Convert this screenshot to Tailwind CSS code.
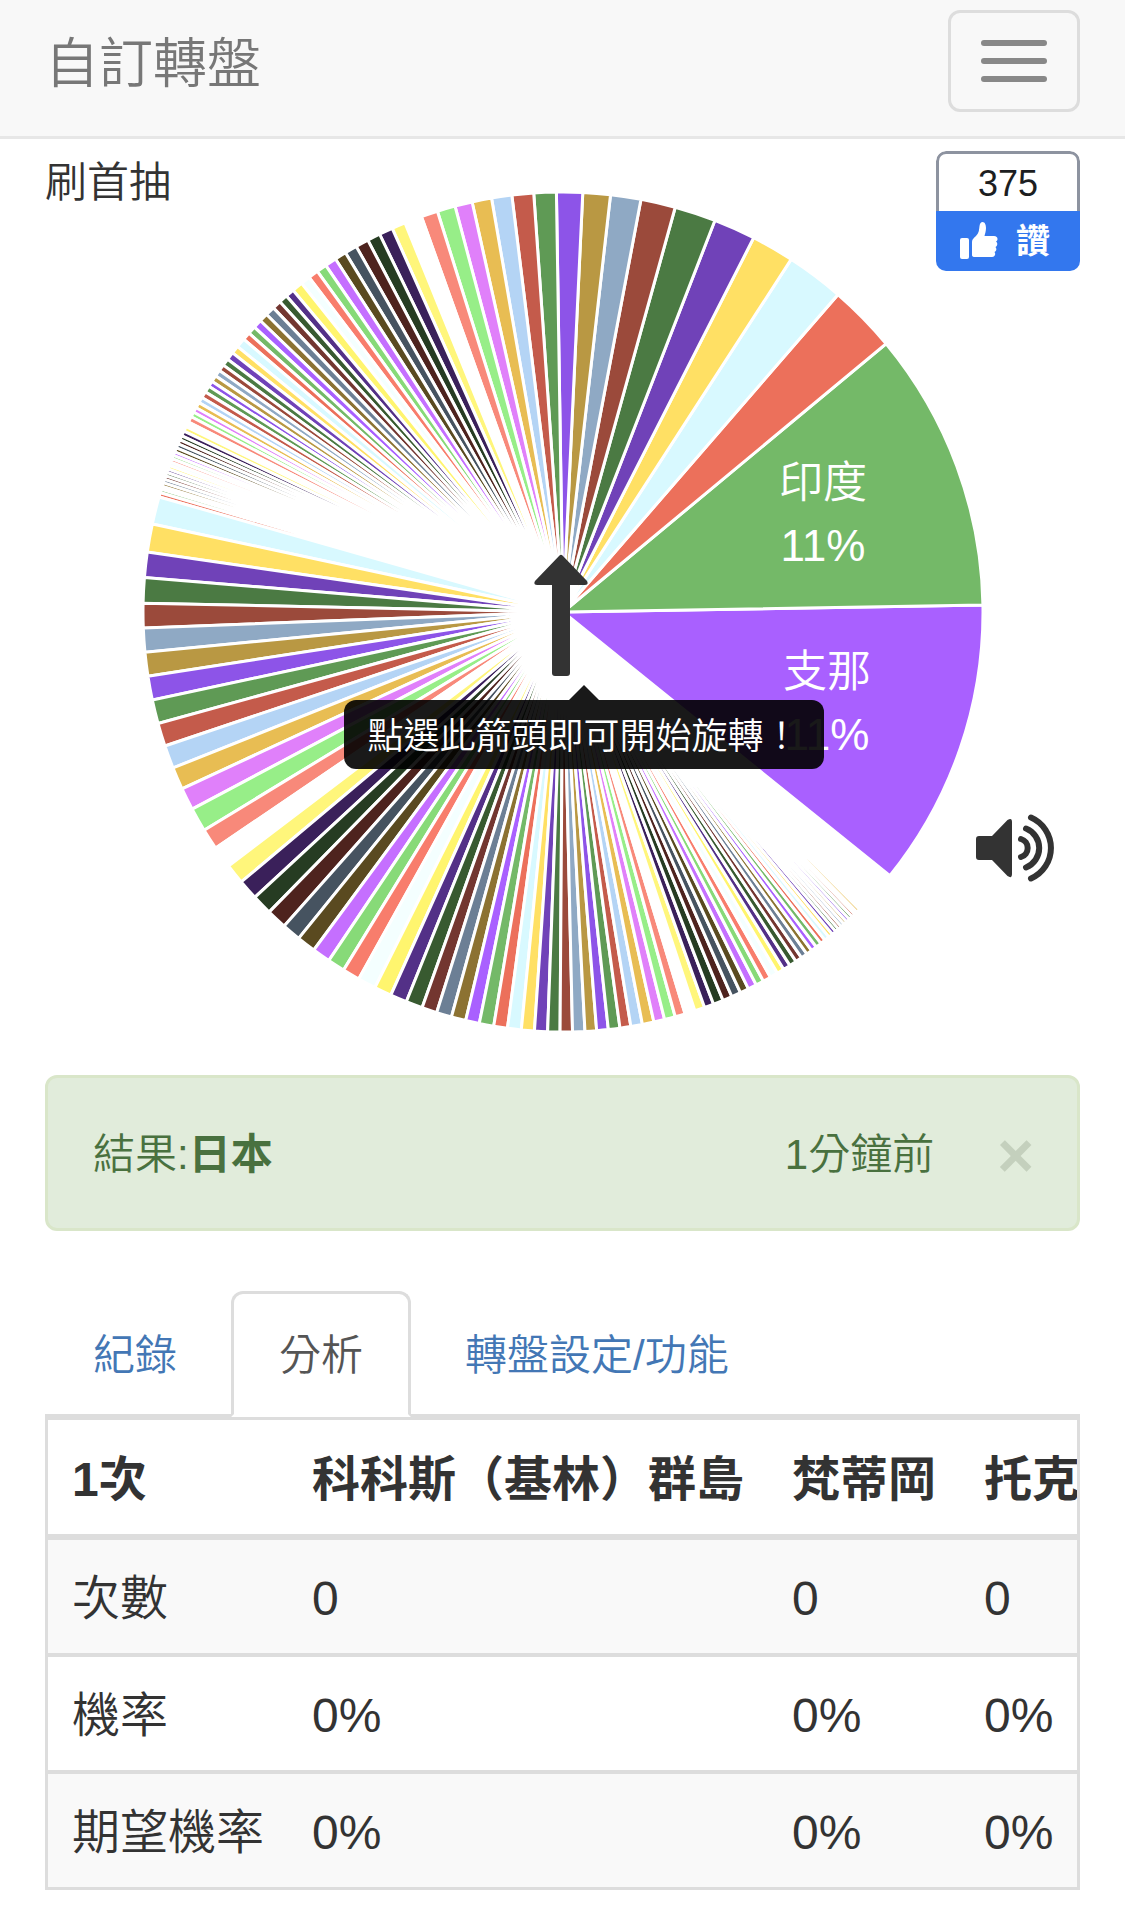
<!DOCTYPE html>
<html lang="zh-Hant">
  <head>
    <meta charset="UTF-8" />
    <meta name="viewport" content="width=device-width, initial-scale=1.0" />
    <title>自訂轉盤</title>
    <script src="https://cdn.jsdelivr.net/npm/@tailwindcss/browser@4"></script>
  </head>
  <body
    class="bg-white text-[#333] font-[350] font-['Liberation_Sans','Noto_Sans_CJK_TC',sans-serif]"
  >
    <nav
      class="bg-[#f8f8f8] border-b-3 border-[#e7e7e7] px-[45px] pt-[10px] pb-[18px] flex justify-between items-start"
    >
      <a href="#" class="text-[54px] leading-[108px] text-[#777]">自訂轉盤</a>
      <button
        type="button"
        aria-label="選單"
        class="w-[132px] h-[102px] border-3 border-[#ddd] rounded-xl flex flex-col items-center justify-center gap-3"
      >
        <span class="block w-[66px] h-[6px] rounded-[3px] bg-[#888]"></span>
        <span class="block w-[66px] h-[6px] rounded-[3px] bg-[#888]"></span>
        <span class="block w-[66px] h-[6px] rounded-[3px] bg-[#888]"></span>
      </button>
    </nav>

    <main class="px-[45px] pb-[18px]">
      <section class="relative pt-[51px] pb-[41px]">
        <h1 class="absolute left-0 top-[14px] text-[42px] leading-[60px]">刷首抽</h1>

        <!-- like counter -->
        <button
          type="button"
          class="absolute right-0 top-3 w-[144px] h-[120px] rounded-[10px] overflow-hidden flex flex-col"
        >
          <span
            class="w-full h-[60px] border-3 border-b-0 border-[#8d93a0] rounded-t-[10px] text-[36px] leading-[60px] text-[#1c1e21]"
            >375</span
          >
          <span
            class="w-full h-[60px] pr-[6px] bg-[#3377ee] text-white text-[34px] leading-[60px] font-bold flex items-center justify-center gap-[18px]"
          >
            <svg class="w-[38px] h-[38px]" viewBox="0 0 38 38" fill="currentColor">
              <rect x="0" y="16" width="9" height="21" rx="2" />
              <path
                d="M12 20 C12 17 14 16 16 14 C19 11 19 8 19.500 4 C20 1 21 0 22.500 0 C25 0 26 3 26 6 C26 9 25 12 24.500 14 L34 14 C38 14 38.500 18 36 19.500 C38 21 37.500 24 35.500 25 C37 27 36.500 29 34.500 30 C36 32 35 35 32 35 L15 35 C13 35 12 34.500 12 33 Z"
              />
            </svg>
            讚
          </span>
        </button>

        <div class="relative w-[844px] h-[844px] mx-auto">
          <svg class="w-full h-full" viewBox="-422 -422 844 844">
            <g id="slices" stroke="#fff" stroke-width="3"></g>
            <g fill="#fff" font-size="44" text-anchor="middle">
              <text x="260" y="-114">印度</text>
              <text x="260" y="-51">11%</text>
              <text x="264" y="75">支那</text>
              <text x="264" y="138">11%</text>
            </g>
          </svg>

          <button
            type="button"
            aria-label="開始旋轉"
            aria-describedby="spin-tip"
            class="absolute left-[393px] top-[364px] w-[54px] h-[122px] text-[#333]"
          >
            <svg class="w-full h-full" viewBox="0 0 54 122" fill="currentColor">
              <path
                d="M25.500 1.500 Q27 0 28.500 1.500 L53 27 Q55 31 51 31 H36 V119 Q36 122 33 122 H21 Q18 122 18 119 V31 H3 Q-1 31 1 27 Z"
              />
            </svg>
          </button>

          <div id="spin-tip" role="tooltip" class="absolute left-[203px] top-[495px] w-[480px]">
            <svg class="block mx-auto w-[30px] h-[15px]" viewBox="0 0 30 15">
              <path d="M0 15 L15 0 L30 15 Z" fill="#000" fill-opacity="0.9" />
            </svg>
            <p
              class="bg-black/90 text-white text-[36px] leading-[51px] pt-[11px] pb-[7px] px-6 rounded-xl whitespace-nowrap"
            >
              點選此箭頭即可開始旋轉！
            </p>
          </div>
        </div>

        <button
          type="button"
          aria-label="音效"
          class="absolute right-[26px] top-[675px] w-[78px] h-[68px] text-[#333]"
        >
          <svg class="w-full h-full" viewBox="0 0 78 68" fill="none">
            <path
              d="M3 22 H16 L31.500 6 Q36 3 36 8 V60 Q36 65 31.500 62 L16 46 H3 Q0 46 0 43 V25 Q0 22 3 22 Z"
              fill="currentColor"
            />
            <g stroke="currentColor" stroke-width="6" stroke-linecap="round">
              <path d="M45 25 A9.400 9.400 0 0 1 45 43" />
              <path d="M50 14.500 A21 21 0 0 1 50 53.500" />
              <path d="M55 3.500 A33.300 33.300 0 0 1 55 64.500" />
            </g>
          </svg>
        </button>
      </section>

      <!-- last result -->
      <div
        class="border-3 border-[#d9e6c9] rounded-xl bg-[#e1ecdb] text-[#49713f] text-[42px] leading-[60px] pl-[45px] pr-[43px] pt-[47px] pb-[43px] flex items-center"
      >
        <p>結果:<strong class="font-bold">日本</strong></p>
        <p class="ml-auto">1分鐘前</p>
        <button
          type="button"
          aria-label="關閉"
          class="ml-[63px] text-[63px] leading-[60px] font-bold text-[#c4d0bd]"
        >
          ×
        </button>
      </div>

      <ul class="mt-[60px] flex gap-[6px] border-b-3 border-[#ddd] text-[42px] leading-[60px]">
        <li class="-mb-[3px]">
          <a href="#" class="block border-3 border-transparent px-[45px] pt-8 pb-7 text-[#4377b5]">紀錄</a>
        </li>
        <li class="-mb-[3px]">
          <a
            href="#"
            class="block border-3 border-[#ddd] border-b-white rounded-t-xl bg-white px-[45px] pt-8 pb-7 text-[#555]"
            >分析</a
          >
        </li>
        <li class="-mb-[3px]">
          <a href="#" class="block border-3 border-transparent px-[45px] pt-8 pb-7 text-[#4377b5]">轉盤設定/功能</a>
        </li>
      </ul>

      <div class="border-3 border-[#ddd] overflow-hidden">
        <table class="text-[48px] leading-[65px] whitespace-nowrap text-left">
          <thead>
            <tr class="border-b-6 border-[#ddd]">
              <th class="px-6 pt-[27px] pb-[22px] font-bold">1次</th>
              <th class="px-6 pt-[27px] pb-[22px] font-bold">科科斯（基林）群島</th>
              <th class="px-6 pt-[27px] pb-[22px] font-bold">梵蒂岡</th>
              <th class="px-6 pt-[27px] pb-[22px] font-bold">托克勞群島</th>
            </tr>
          </thead>
          <tbody>
            <tr class="bg-[#f9f9f9]">
              <td class="px-6 pt-[26px] pb-[22px]">次數</td>
              <td class="px-6 pt-[26px] pb-[22px]">0</td>
              <td class="px-6 pt-[26px] pb-[22px]">0</td>
              <td class="px-6 pt-[26px] pb-[22px]">0</td>
            </tr>
            <tr class="border-t-4 border-[#ddd]">
              <td class="px-6 pt-[26px] pb-[22px]">機率</td>
              <td class="px-6 pt-[26px] pb-[22px]">0%</td>
              <td class="px-6 pt-[26px] pb-[22px]">0%</td>
              <td class="px-6 pt-[26px] pb-[22px]">0%</td>
            </tr>
            <tr class="border-t-4 border-[#ddd] bg-[#f9f9f9]">
              <td class="px-6 pt-[26px] pb-[22px]">期望機率</td>
              <td class="px-6 pt-[26px] pb-[22px]">0%</td>
              <td class="px-6 pt-[26px] pb-[22px]">0%</td>
              <td class="px-6 pt-[26px] pb-[22px]">0%</td>
            </tr>
          </tbody>
        </table>
      </div>
    </main>

    <script>
      // the palette repeats every 35 slices
      const palette = [
        "#a960ff", "#74b968", "#ec705b", "#d8f9ff", "#ffe064", "#7042b8", "#4b7a43",
        "#9b4a3b", "#8fa9c4", "#b99843", "#8d54e8", "#5f9a55", "#c45b4b", "#b4d4f5",
        "#e8bd53", "#e080fa", "#97ee88", "#f8897a", "#ffffff", "#fff67b", "#3a205a",
        "#263c22", "#4e231e", "#465360", "#5a4a20", "#c56fff", "#87da78", "#f87d6c",
        "#f4ffff", "#fff56e", "#533087", "#385a30", "#733630", "#6c7f95", "#8c7232",
      ];

      // slice edges in degrees, counter-clockwise from 3 o'clock
      const first = [
        -38.9, 0.95, 39.7, 49.1, 57.1, 63, 68.8, 74.5, 79.3, 83.5, 87.3, 90.9, 94,
        97, 99.8, 102.5, 104.9, 107.4, 109.7, 112.1, 114, 115.9, 117.7, 119.5, 121.2,
        122.8, 124.4, 125.8, 127.2, 128.5, 130, 131.2, 132.4, 133.6, 134.9, 136.1,
        137.3, 138.4, 139.5, 140.8, 141.9, 143, 144, 144.9, 145.8, 146.7, 147.5,
        148.4, 149.3, 150.1, 150.9, 151.6, 152.3, 153.1, 153.8, 154.5, 155.2, 155.8,
        156.4, 157, 157.6, 158.1, 158.6, 159.1, 159.6, 160.1, 160.6, 161.1, 161.6,
        162.1, 162.6, 163, 163.5, 164.1,
      ];
      const second = [
        164.1, 167.9, 171.8, 175.3, 178.8, 182.2, 185.5, 188.8, 192.1, 195.4, 198.6,
        201.8, 204.9, 208, 211.3, 214.2, 217.2, 220, 222.8, 225.6, 228.4, 231, 233.6,
        236.1, 238.5, 240.9, 243.4, 245.8, 248.1, 250.4, 252.5, 254.6, 256.6, 258.5,
        260.5, 262.4, 264.3, 266.1, 267.9, 269.6, 271.3, 273, 274.6, 276.2, 277.8,
        279.3, 280.9, 282.5, 284, 285.5, 286.9, 288.3, 289.7, 291, 292.4, 293.7, 295,
        296.2, 297.4, 298.5, 299.6, 300.7, 301.7, 302.7, 303.7, 304.6, 305.5, 306.3,
        307.1, 307.9, 308.6, 309.3, 309.9, 310.5, 311, 311.5, 312, 312.5, 313,
        313.5, 314, 314.4, 314.9,
      ];

      const radius = 420;
      const slices = document.getElementById("slices");

      function point(deg) {
        const a = (deg * Math.PI) / 180;
        return `${radius * Math.cos(a)} ${-radius * Math.sin(a)}`;
      }

      function drawSlices(edges, offset) {
        for (let i = 0; i < edges.length - 1; i++) {
          const path = document.createElementNS("http://www.w3.org/2000/svg", "path");
          path.setAttribute(
            "d",
            `M0 0 L${point(edges[i])} A${radius} ${radius} 0 0 0 ${point(edges[i + 1])} Z`
          );
          path.setAttribute("fill", palette[(i + offset) % palette.length]);
          slices.appendChild(path);
        }
      }

      drawSlices(first, 0);
      drawSlices(second, 3);
    </script>
  </body>
</html>
